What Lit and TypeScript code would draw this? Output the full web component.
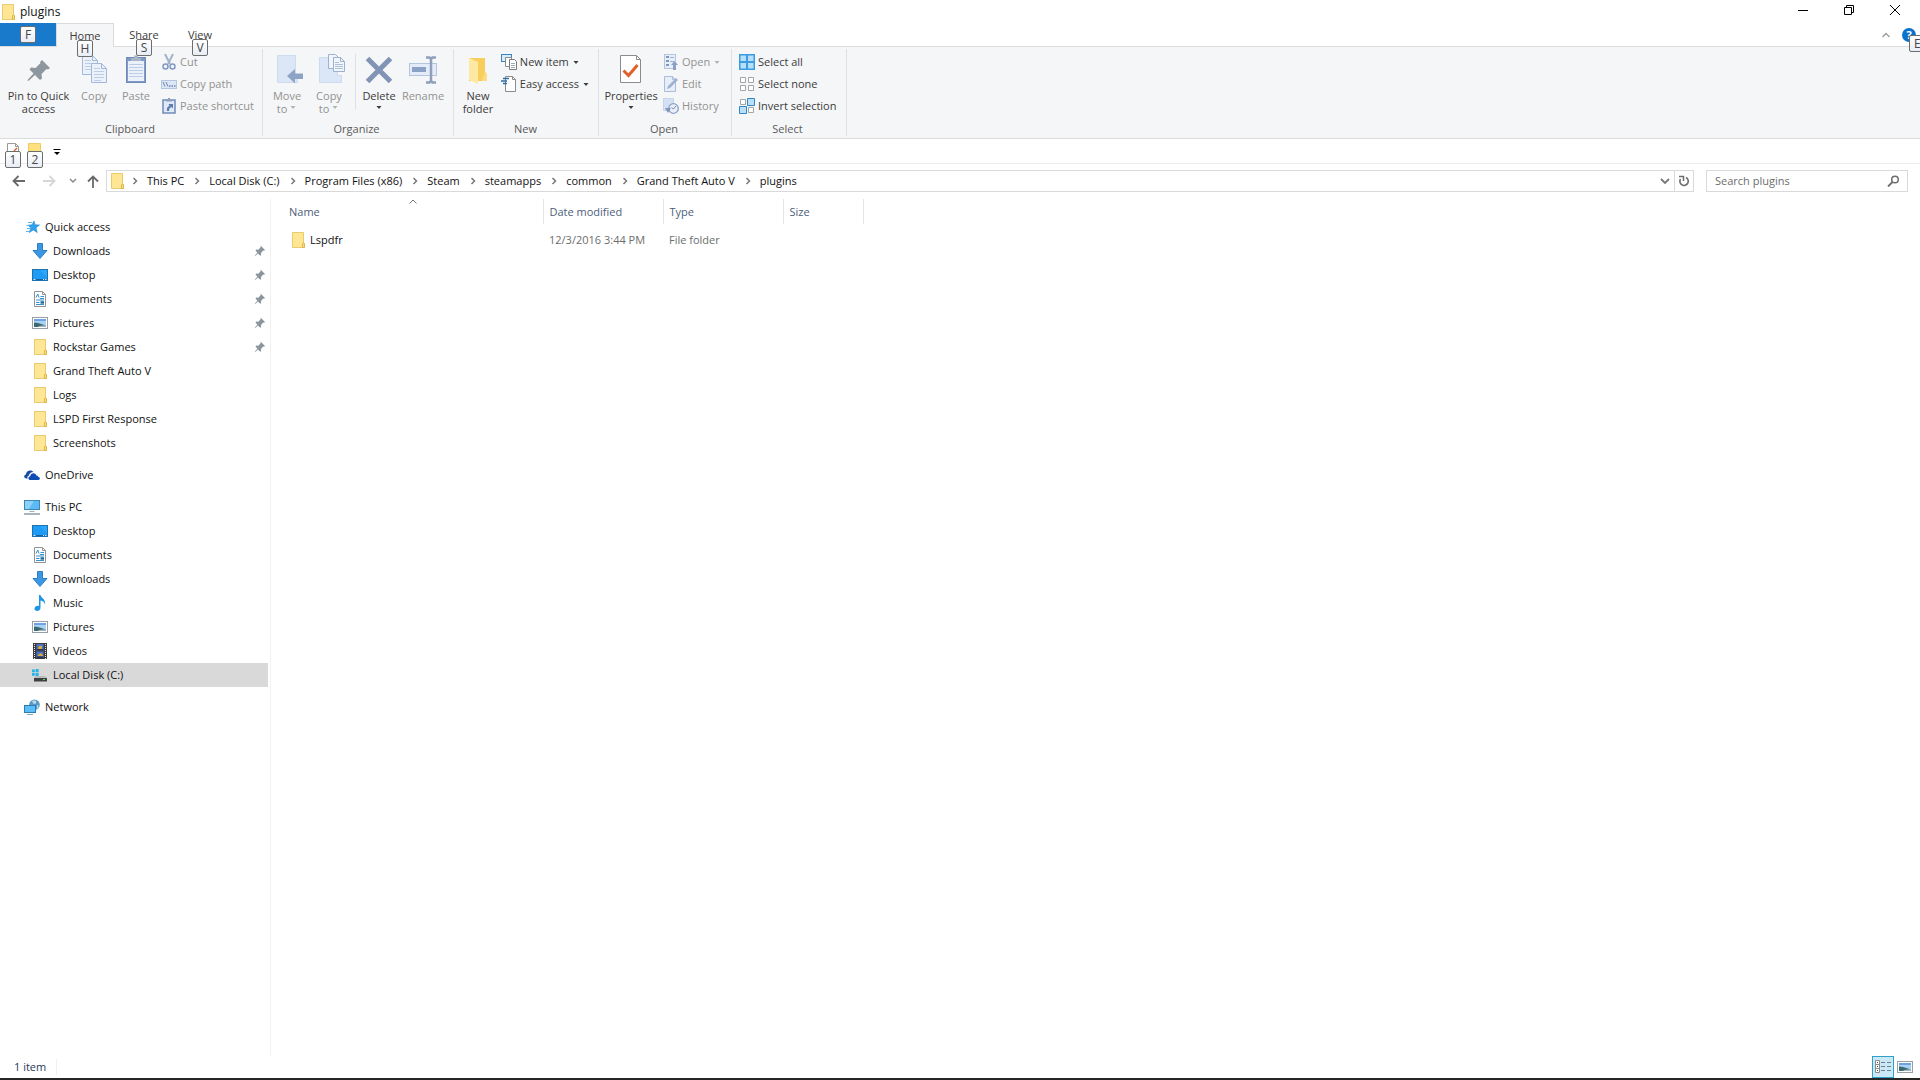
import { LitElement, html, css, nothing, TemplateResult } from "lit";
import { customElement } from "lit/decorators.js";
import { classMap } from "lit/directives/class-map.js";

/* ---------- icons ---------- */

const folder = () => html`<svg width="16" height="16" viewBox="0 0 16 16" aria-hidden="true">
  <path d="M2.500.5h11v10l1 1v4h-12z" fill="#ffe694" stroke="#e9cb6c" />
  <path d="M12.500 15.500v-3.500l1-1.500 1 1.500v3.500z" fill="#fbdc7c" stroke="#dcb84f" />
</svg>`;

const folderLarge = () => html`<svg width="32" height="32" viewBox="0 0 32 32" aria-hidden="true">
  <path d="M7 4h16v14l2 2v7H7z" fill="#f8cf5c" />
  <path d="M23 18l2 2v7h-5z" fill="#fbdc85" />
  <path d="M7 4l9 4v22l-9-4z" fill="#ffe9a2" />
</svg>`;

const pinLarge = () => html`<svg width="32" height="32" viewBox="0 0 32 32" aria-hidden="true">
  <path d="M19 6l8 8-2 1.500-1.500-.5-5 5 .5 4.500-2 1.500-5-5-6 5.500-1.500.5.500-1.500 5.500-6-4-4 1.500-2 4.500.5 5-5L17 8z" fill="#8f979e" />
</svg>`;

const pinSmall = () => html`<svg width="12" height="12" viewBox="0 0 12 12" aria-hidden="true">
  <path d="M7 1l4 4-1 .8-.8-.2L7 8l.2 2-1 .8L4 8.500 1.300 10.900l-.4-.4L3.400 7.800 1.500 5.500l.8-.9 2 .1L6.500 2.600l-.2-.8z" fill="#8c949b" />
</svg>`;

const copyLarge = () => html`<svg width="32" height="32" viewBox="0 0 32 32" aria-hidden="true">
  <g fill="#eaf1fb" stroke="#a3b8d8">
    <path d="M4.500 1.500h10l5 5v14h-15z" /><path d="M14.500 1.500v5h5" fill="none" />
    <path d="M7 6.500h6M7 9.500h9M7 12.500h9M7 15.500h9" stroke="#bccde6" />
    <path d="M13.500 9.500h10l5 5v14h-15z" /><path d="M23.500 9.500v5h5" fill="none" />
    <path d="M16 14.500h6M16 17.500h10M16 20.500h10M16 23.500h10M16 26.500h7" stroke="#bccde6" />
  </g>
</svg>`;

const pasteLarge = () => html`<svg width="32" height="32" viewBox="0 0 32 32" aria-hidden="true">
  <rect x="6.500" y="3.500" width="19" height="25" fill="#7f9bc6" stroke="#6f8bb8" />
  <rect x="8" y="7" width="16" height="20" fill="#eaf1fb" />
  <path d="M9 10.500h14M9 13.500h14M9 16.500h14M9 19.500h14M9 22.500h14" stroke="#bccde6" />
  <path d="M11 7V4h3V1.500h4V4h3v3z" fill="#a9b5c6" />
</svg>`;

const cut = () => html`<svg width="16" height="16" viewBox="0 0 16 16" aria-hidden="true">
  <path d="M4 0l5 10M12 0L7 10" stroke="#a3b2c9" stroke-width="2" />
  <circle cx="4.500" cy="12.500" r="2.500" fill="none" stroke="#8199c2" stroke-width="1.500" />
  <circle cx="11.500" cy="12.500" r="2.500" fill="none" stroke="#8199c2" stroke-width="1.500" />
</svg>`;

const copyPath = () => html`<svg width="16" height="16" viewBox="0 0 16 16" aria-hidden="true">
  <rect x=".5" y="4.500" width="15" height="8" fill="#dbe6f6" stroke="#b4c5df" />
  <path d="M2 6l2 4.500M5 6l2 4.500" stroke="#6f87b0" />
  <path d="M8 10h1.500M10.500 10H12M13 10h1.500" stroke="#6f87b0" stroke-width="1.500" />
</svg>`;

const pasteShortcut = () => html`<svg width="16" height="16" viewBox="0 0 16 16" aria-hidden="true">
  <rect x="2" y="2" width="12" height="13" fill="#dfe9f7" stroke="#6f8bb8" stroke-width="1.500" />
  <path d="M5 3.500V1.500h2V0h2v1.500h2v2z" fill="#8f9fb8" />
  <path d="M6 13c-.5-3 .5-4.500 2.500-5L7.500 6H12v4.500l-1.500-1.500C9 9.500 8 10.500 8 13z" fill="#5f7cab" />
</svg>`;

const moveTo = () => html`<svg width="32" height="32" viewBox="0 0 32 32" aria-hidden="true">
  <path d="M6.500 1.500h18v20h2v7h-20z" fill="#dbe7f6" stroke="#cddbee" />
  <path d="M16 22l8-7v4.500h8v5.500h-8v4.500z" fill="#8fa3c4" />
</svg>`;

const copyTo = () => html`<svg width="32" height="32" viewBox="0 0 32 32" aria-hidden="true">
  <path d="M6.500 3.500h18v18h4v7h-22z" fill="#dbe7f6" stroke="#cddbee" />
  <g fill="#f2f6fc" stroke="#9db1d1">
    <path d="M15.500.5h7l3 3v11h-10z" />
    <path d="M20.500 3.500h7l4 4v10h-11z" /><path d="M27.500 3.500v4h4" fill="none" />
    <path d="M22 8.500h4M22 10.500h8M22 12.500h8M22 14.500h8" stroke="#aebfda" />
  </g>
</svg>`;

const deleteIcon = () => html`<svg width="32" height="32" viewBox="0 0 32 32" aria-hidden="true">
  <path d="M4.500 4.500l23 23M27.500 4.500l-23 23" stroke="#8194b5" stroke-width="5" />
</svg>`;

const renameIcon = () => html`<svg width="32" height="32" viewBox="0 0 32 32" aria-hidden="true">
  <rect x="2.500" y="9.500" width="27" height="12" fill="#e3ecf8" stroke="#b4c5df" />
  <rect x="5" y="13" width="14" height="5" fill="#8ba1c6" />
  <path d="M19 3.500h3.500L24 5l1.500-1.500H29M24 4v23M19 28.500h3.500L24 27l1.500 1.500H29" stroke="#8f9fba" stroke-width="2.500" fill="none" />
</svg>`;

const newItem = () => html`<svg width="16" height="16" viewBox="0 0 16 16" aria-hidden="true">
  <rect x=".5" y=".5" width="10" height="7" fill="#d9ecfa" stroke="#3c84bd" />
  <path d="M4.500 3.500h6v9h-6z" fill="#fff" stroke="#8b8b8b" />
  <path d="M8.500 5.500h5l2 2v8h-7z" fill="#fff" stroke="#7b7b7b" />
  <path d="M10 9.500h4M10 11.500h4M10 13.500h4" stroke="#9aabb9" />
</svg>`;

const easyAccess = () => html`<svg width="16" height="16" viewBox="0 0 16 16" aria-hidden="true">
  <path d="M4.500.5h7l3 3v12h-10z" fill="#fff" stroke="#8b8b8b" /><path d="M11.500.5v3h3" fill="none" stroke="#8b8b8b" />
  <path d="M2 2.500h6M0 5h6M2 7.500h4" stroke="#2b6fa5" stroke-width="1.500" />
</svg>`;

const propertiesIcon = () => html`<svg width="32" height="32" viewBox="0 0 32 32" aria-hidden="true">
  <path d="M5.500 1.500h16l4 4v23h-20z" fill="#fff" stroke="#8b8b8b" /><path d="M21.500 1.500v4h4" fill="none" stroke="#8b8b8b" />
  <path d="M8.500 16.500l5 5L22.500 11" fill="none" stroke="#e0602a" stroke-width="3" />
</svg>`;

const openIcon = () => html`<svg width="16" height="16" viewBox="0 0 16 16" aria-hidden="true">
  <rect x="1.500" y=".5" width="11" height="14" fill="#e6eefa" stroke="#b4c5df" />
  <path d="M3 3h3M3 7h3M3 11h3" stroke="#7f96bd" stroke-width="2" />
  <path d="M7 3.500h4M7 7.500h4" stroke="#9fb2d1" />
  <path d="M8 11l3.500-4L15 11h-2v5h-3v-5z" fill="#8ba0c4" />
</svg>`;

const editIcon = () => html`<svg width="16" height="16" viewBox="0 0 16 16" aria-hidden="true">
  <path d="M1.500.5h8l3 3v12h-11z" fill="#e6eefa" stroke="#a9bddb" /><path d="M9.500.5v3h3" fill="none" stroke="#a9bddb" />
  <path d="M4 13l1-3 8-8 2 2-8 8z" fill="#9fb2d1" />
</svg>`;

const historyIcon = () => html`<svg width="16" height="16" viewBox="0 0 16 16" aria-hidden="true">
  <path d="M.5.5h10v12H.5z" fill="#d5e1f3" stroke="#c5d4ea" />
  <circle cx="10.500" cy="10.500" r="4.800" fill="#e9f0fa" stroke="#8ba0c4" stroke-width="1.300" />
  <path d="M13 8l-2.500 3-2-1.500" fill="none" stroke="#7188b0" />
  <path d="M2 10h6l-3 5z" fill="#7f96bd" />
</svg>`;

const selectAll = () => html`<svg width="16" height="16" viewBox="0 0 16 16" aria-hidden="true">
  <rect width="16" height="16" fill="#3d9be0" />
  <path d="M1.500 1.500h5.500v5.500H1.500zM9 1.500h5.500v5.500H9zM1.500 9h5.500v5.500H1.500zM9 9h5.500v5.500H9z" fill="#b5dffb" />
</svg>`;

const selectNone = () => html`<svg width="16" height="16" viewBox="0 0 16 16" aria-hidden="true">
  <path d="M1.500 1.500h5v5h-5zM9.500 1.500h5v5h-5zM1.500 9.500h5v5h-5zM9.500 9.500h5v5h-5z" fill="#fff" stroke="#a5a5a5" />
</svg>`;

const invertSelection = () => html`<svg width="16" height="16" viewBox="0 0 16 16" aria-hidden="true">
  <path d="M1.500 1.500h5v5h-5zM9.500 9.500h5v5h-5z" fill="#fff" stroke="#a5a5a5" />
  <path d="M8.500.5h7v7h-7zM.5 8.500h7v7h-7z" fill="#b9dffa" stroke="#3186c8" />
</svg>`;

const star = () => html`<svg width="16" height="16" viewBox="0 0 16 16" aria-hidden="true">
  <path d="M10 2l1 3.800 4.500.2-3.500 2.800 1.200 4.700-3.800-2.500-4.200 2.500 1.700-4.500L4 6.200l4-.4z" fill="#2fa2ec" stroke="#1f86cf" stroke-width=".6" />
  <path d="M4 3.500h4M2.500 6.500h3M3 9.500h3M2 12.500h3" stroke="#5bb6ee" />
</svg>`;

const downloads = () => html`<svg width="16" height="16" viewBox="0 0 16 16" aria-hidden="true">
  <path d="M5.500.5h5v7h4.500L8 15.500 1 7.500h4.500z" fill="#3b97e3" stroke="#2f7fc6" />
</svg>`;

const desktop = () => html`<svg width="16" height="16" viewBox="0 0 16 16" aria-hidden="true">
  <rect x=".5" y="2.500" width="15" height="11" fill="#1e9cf5" stroke="#1b72b3" />
  <path d="M15 3v8L8 3z" fill="#2ca6f9" />
  <path d="M1 12.500h14" stroke="#1464a0" />
  <path d="M1.500 12.500h2M11 12.500h1M13 12.500h1.500" stroke="#d4ebfb" />
</svg>`;

const documents = () => html`<svg width="16" height="16" viewBox="0 0 16 16" aria-hidden="true">
  <path d="M2.500.5h8l3 3v12h-11z" fill="#fff" stroke="#8e9499" /><path d="M10.500.5v3h3" fill="none" stroke="#8e9499" />
  <path d="M4 6.500l1.800-3.500 1.200 3.500M4 9h8M4 13.500h8M4 11.500h3.500" fill="none" stroke="#3a8ecb" />
  <path d="M8.500 5.500h3.500M8 7.500h4" stroke="#3a8ecb" /><path d="M8.500 10.200h3.500v2.500H8.500z" fill="#246ba3" />
</svg>`;

const pictures = () => html`<svg width="16" height="16" viewBox="0 0 16 16" aria-hidden="true">
  <rect x=".5" y="2.500" width="15" height="11" fill="#fff" stroke="#97a0a6" />
  <path d="M2 4h12v8H2z" fill="#a9d3f5" />
  <path d="M2 4h12v2H2z" fill="#6fa3e0" />
  <path d="M2 7.500l4 .5 8 2.500V12H2z" fill="#3d6a72" /><path d="M7 11l7-1v2H6z" fill="#a0b4c2" />
</svg>`;

const cloud = () => html`<svg width="16" height="16" viewBox="0 0 16 16" aria-hidden="true">
  <path d="M2.500 11.500C-.5 11.500-.5 8 2 7.500 2 3.500 7.500 2 9.500 5 6.500 5 5 7 5 8.500 3.500 9 3 10.500 3.800 11.500z" fill="#1a4ba0" />
  <path d="M6.500 13c-2.700 0-2.700-3.300-.3-3.700C6.500 5.500 11.500 5 12.300 8.500 13.500 8.300 14 9 14 9.700c2.500.2 2.500 3.300.3 3.300z" fill="#0f4db3" />
</svg>`;

const thisPc = () => html`<svg width="16" height="16" viewBox="0 0 16 16" aria-hidden="true">
  <rect x=".5" y="1.500" width="15" height="9" fill="#5bb9f5" stroke="#3d86b8" />
  <path d="M1 2h9L5 10H1z" fill="#8dd0fa" />
  <path d="M5.500 12.500h5" stroke="#9db4c2" /><path d="M0 15h16" stroke="#8f9ba3" stroke-width="1.500" />
</svg>`;

const music = () => html`<svg width="16" height="16" viewBox="0 0 16 16" aria-hidden="true">
  <path d="M7 0h1.500c.5 3 5.500 4 4.500 9.500-.5-2.500-2-3.500-4.500-4v7.500c0 3.500-6 4-6 .8C2.500 11.500 5 10.500 7 11z" fill="#1e95e6" />
</svg>`;

const videos = () => html`<svg width="16" height="16" viewBox="0 0 16 16" aria-hidden="true">
  <rect x="1" y="0" width="14" height="16" fill="#3b3b3b" />
  <path d="M2.500 1v15M13.500 1v15" stroke="#e6e6e6" stroke-dasharray="1 1" />
  <path d="M4.500 1h7v6.500h-7zM4.500 8.500h7V15h-7z" fill="#4b74c9" />
  <path d="M7 3h3v3H6zM6 12l3-2 2.500 3H6z" fill="#d9ab38" /><path d="M5 6h6v1.500H5zM5 13.500h6V15H5z" fill="#28304a" />
</svg>`;

const disk = () => html`<svg width="16" height="16" viewBox="0 0 16 16" aria-hidden="true">
  <path d="M0 2.500h2.800v2.800H0zM3.600 2h3v3.300h-3zM0 6h2.800v2.800H0zM3.600 6h3v3.200h-3z" fill="#25b3e8" />
  <path d="M3.500 9h9.500l2 2H2z" fill="#b9bdc0" /><path d="M2 11h13v3.500H2z" fill="#3d4143" />
  <path d="M11 12.500h2" stroke="#4fe05c" stroke-width="1.200" />
</svg>`;

const network = () => html`<svg width="16" height="16" viewBox="0 0 16 16" aria-hidden="true">
  <circle cx="10.500" cy="5.800" r="5.300" fill="#5a9ac2" /><path d="M8 2c3-2 5 0 4 2s-3 1-4-2zM13 6c2 0 2 3 0 4z" fill="#b7d9ec" />
  <rect x=".5" y="6.500" width="11" height="7" fill="#5bbdf8" stroke="#2b7cb5" />
  <path d="M3 15.500h6" stroke="#7fa8c2" />
</svg>`;

const caret = () => html`<svg class="caret" width="8" height="5" viewBox="0 0 8 5" aria-hidden="true">
  <path d="M1.500 1h5L4 4z" fill="currentColor" />
</svg>`;

const chevron = () => html`<svg width="8" height="8" viewBox="0 0 8 8" aria-hidden="true">
  <path d="M2.500 1l3 3-3 3" fill="none" stroke="#777" stroke-width="1.500" />
</svg>`;

/* ---------- data ---------- */

interface Command {
  label: string;
  icon: () => TemplateResult;
  disabled?: boolean;
  menu?: boolean;
}

interface Place {
  label: string;
  icon: () => TemplateResult;
  pinned?: boolean;
  selected?: boolean;
}

interface PlaceGroup extends Place {
  children: Place[];
}

const places: PlaceGroup[] = [
  {
    label: "Quick access",
    icon: star,
    children: [
      { label: "Downloads", icon: downloads, pinned: true },
      { label: "Desktop", icon: desktop, pinned: true },
      { label: "Documents", icon: documents, pinned: true },
      { label: "Pictures", icon: pictures, pinned: true },
      { label: "Rockstar Games", icon: folder, pinned: true },
      { label: "Grand Theft Auto V", icon: folder },
      { label: "Logs", icon: folder },
      { label: "LSPD First Response", icon: folder },
      { label: "Screenshots", icon: folder },
    ],
  },
  { label: "OneDrive", icon: cloud, children: [] },
  {
    label: "This PC",
    icon: thisPc,
    children: [
      { label: "Desktop", icon: desktop },
      { label: "Documents", icon: documents },
      { label: "Downloads", icon: downloads },
      { label: "Music", icon: music },
      { label: "Pictures", icon: pictures },
      { label: "Videos", icon: videos },
      { label: "Local Disk (C:)", icon: disk, selected: true },
    ],
  },
  { label: "Network", icon: network, children: [] },
];

const crumbs = [
  "This PC",
  "Local Disk (C:)",
  "Program Files (x86)",
  "Steam",
  "steamapps",
  "common",
  "Grand Theft Auto V",
  "plugins",
];

const resets = css`
  button,
  input {
    font: inherit;
    color: inherit;
    border: 0;
    padding: 0;
    margin: 0;
    background: none;
  }
  a {
    color: inherit;
    text-decoration: none;
  }
  svg {
    display: block;
    flex: none;
  }
  .keytip {
    position: absolute;
    z-index: 1;
    box-sizing: border-box;
    width: 16px;
    height: 17px;
    border: 1px solid #6d6d6d;
    border-radius: 2px;
    background: linear-gradient(#fff, #e8edf6);
    color: #454545;
    font-size: 12px;
    line-height: 15px;
    text-align: center;
  }
`;

/* ---------- ribbon ---------- */

@customElement("explorer-ribbon")
export class ExplorerRibbon extends LitElement {
  static styles = [
    resets,
    css`
      :host {
        display: flex;
        height: 91px;
        background: #f5f6f7;
        border-bottom: 1px solid #dadbdc;
        color: #3b3b3b;
      }
      .group {
        display: flex;
        flex-direction: column;
        box-sizing: border-box;
        margin: 2px 0;
        padding: 2px 4px 0;
        border-right: 1px solid #dfe0e1;
      }
      .commands {
        display: flex;
        flex: 1;
      }
      .title {
        padding-right: 2px;
        color: #5a5a5a;
        text-align: center;
        line-height: 14px;
      }
      .large {
        display: flex;
        flex-direction: column;
        align-items: center;
        width: 42px;
        padding-top: 3px;
        line-height: 13px;
        white-space: nowrap;
      }
      .large svg:first-child {
        margin-bottom: 3px;
      }
      .wide {
        width: 56px;
      }
      .widest {
        width: 69px;
      }
      .line {
        display: flex;
        align-items: center;
        gap: 2px;
        height: 13px;
      }
      .stack {
        display: flex;
        flex-direction: column;
        padding: 0 4px;
      }
      .small {
        display: flex;
        align-items: center;
        gap: 3px;
        height: 22px;
        white-space: nowrap;
      }
      .large:disabled,
      .small:disabled {
        color: #929292;
      }
      .large:disabled .caret,
      .small:disabled .caret {
        color: #b4b4b4;
      }
      .divider {
        width: 1px;
        height: 56px;
        margin: 3px 2px 0 5px;
        background: #dfe0e1;
      }
      .clipboard {
        width: 263px;
      }
      .organize {
        width: 191px;
        padding-left: 3px;
      }
      .organize .large:last-child {
        width: 46px;
      }
      .new {
        width: 145px;
        padding-left: 5px;
      }
      .open {
        width: 133px;
      }
      .select {
        width: 115px;
        padding-left: 3px;
      }
    `,
  ];

  private large(icon: () => TemplateResult, lines: string[], opts: { disabled?: boolean; menu?: boolean; size?: string } = {}) {
    const inlineMenu = opts.menu && lines.length > 1;
    return html`<button class="large ${opts.size ?? ""}" ?disabled=${opts.disabled}>
      ${icon()}
      ${lines.map(
        (text, i) =>
          html`<span class="line">${text}${inlineMenu && i === lines.length - 1 ? caret() : nothing}</span>`
      )}
      ${opts.menu && !inlineMenu ? html`<span class="line">${caret()}</span>` : nothing}
    </button>`;
  }

  private stack(items: Command[]) {
    return html`<div class="stack">
      ${items.map(
        (c) => html`<button class="small" ?disabled=${c.disabled}>
          ${c.icon()}<span>${c.label}</span>${c.menu ? caret() : nothing}
        </button>`
      )}
    </div>`;
  }

  private group(name: string, content: TemplateResult) {
    return html`<section class="group ${name.toLowerCase()}" aria-label=${name}>
      <div class="commands">${content}</div>
      <div class="title">${name}</div>
    </section>`;
  }

  render() {
    const off = { disabled: true };
    return html`
      ${this.group(
        "Clipboard",
        html`${this.large(pinLarge, ["Pin to Quick", "access"], { size: "widest" })}
        ${this.large(copyLarge, ["Copy"], off)} ${this.large(pasteLarge, ["Paste"], off)}
        ${this.stack([
          { label: "Cut", icon: cut, disabled: true },
          { label: "Copy path", icon: copyPath, disabled: true },
          { label: "Paste shortcut", icon: pasteShortcut, disabled: true },
        ])}`
      )}
      ${this.group(
        "Organize",
        html`${this.large(moveTo, ["Move", "to"], { disabled: true, menu: true })}
          ${this.large(copyTo, ["Copy", "to"], { disabled: true, menu: true })}
          <div class="divider"></div>
          ${this.large(deleteIcon, ["Delete"], { menu: true })} ${this.large(renameIcon, ["Rename"], { disabled: true })}`
      )}
      ${this.group(
        "New",
        html`${this.large(folderLarge, ["New", "folder"])}
        ${this.stack([
          { label: "New item", icon: newItem, menu: true },
          { label: "Easy access", icon: easyAccess, menu: true },
        ])}`
      )}
      ${this.group(
        "Open",
        html`${this.large(propertiesIcon, ["Properties"], { menu: true, size: "wide" })}
        ${this.stack([
          { label: "Open", icon: openIcon, menu: true, disabled: true },
          { label: "Edit", icon: editIcon, disabled: true },
          { label: "History", icon: historyIcon, disabled: true },
        ])}`
      )}
      ${this.group(
        "Select",
        this.stack([
          { label: "Select all", icon: selectAll },
          { label: "Select none", icon: selectNone },
          { label: "Invert selection", icon: invertSelection },
        ])
      )}
    `;
  }
}

/* ---------- navigation pane ---------- */

@customElement("explorer-places")
export class ExplorerPlaces extends LitElement {
  static styles = [
    resets,
    css`
      :host {
        display: block;
        box-sizing: border-box;
        width: 271px;
        padding: 16px 2px 0 0;
        border-right: 1px solid #f1f1f1;
      }
      ul {
        list-style: none;
        margin: 0;
        padding: 0;
      }
      .group {
        margin-bottom: 8px;
      }
      .place {
        display: flex;
        align-items: center;
        gap: 5px;
        height: 24px;
        padding: 0 2px 0 24px;
      }
      .child {
        padding-left: 32px;
      }
      .selected {
        background: #d9d9d9;
      }
      .pin {
        margin-left: auto;
      }
    `,
  ];

  private place(p: Place, child: boolean) {
    return html`<a class=${classMap({ place: true, child, selected: !!p.selected })} href="#">
      ${p.icon()}<span>${p.label}</span>${p.pinned ? html`<span class="pin">${pinSmall()}</span>` : nothing}
    </a>`;
  }

  render() {
    return html`<nav aria-label="Places">
      <ul>
        ${places.map(
          (g) => html`<li class="group">
            ${this.place(g, false)}
            ${g.children.length
              ? html`<ul>
                  ${g.children.map((c) => html`<li>${this.place(c, true)}</li>`)}
                </ul>`
              : nothing}
          </li>`
        )}
      </ul>
    </nav>`;
  }
}

/* ---------- window ---------- */

@customElement("app-root")
export class AppRoot extends LitElement {
  static styles = [
    resets,
    css`
      :host {
        display: flex;
        flex-direction: column;
        min-height: 100vh;
        overflow: hidden;
        background: #fff;
        color: #111;
        font-family: "Open Sans", "Noto Sans", sans-serif;
        font-size: 11px;
        line-height: 16px;
      }
      .titlebar {
        display: flex;
        height: 23px;
        padding-right: 2px;
      }
      .caption {
        display: flex;
        align-items: center;
        gap: 4px;
        flex: 1;
        margin: 0;
        font-size: 12px;
        font-weight: 400;
      }
      .window-button {
        display: grid;
        place-items: center;
        width: 46px;
        height: 20px;
      }
      .tabs {
        display: flex;
        height: 23px;
        border-bottom: 1px solid #dadbdc;
        color: #3b3b3b;
      }
      .tab {
        position: relative;
        box-sizing: border-box;
        height: 23px;
        width: 58px;
      }
      .tab .keytip {
        left: 50%;
        bottom: -10px;
        margin-left: -8px;
      }
      .file {
        width: 56px;
        background: #1979ca;
      }
      .file .keytip {
        bottom: 3px;
      }
      .active {
        height: 24px;
        background: #f5f6f7;
        border: 1px solid #dadbdc;
        border-width: 1px 1px 0;
      }
      .share {
        width: 60px;
      }
      .view {
        width: 52px;
      }
      .ribbon-tools {
        display: flex;
        align-items: center;
        gap: 12px;
        margin-left: auto;
        padding-right: 4px;
      }
      .help {
        position: relative;
        width: 14px;
        height: 14px;
        border-radius: 50%;
        background: #0a74cc;
        color: #fff;
        font-weight: 700;
        line-height: 14px;
      }
      .help .keytip {
        left: 7px;
        top: 7px;
        width: 20px;
        padding-left: 4px;
        font-weight: 400;
        text-align: left;
      }
      .quick {
        display: flex;
        height: 24px;
        padding-left: 2px;
        border-bottom: 1px solid #ebebeb;
      }
      .quick-button {
        position: relative;
        display: grid;
        place-items: start center;
        width: 22px;
        height: 24px;
        padding-top: 4px;
      }
      .quick-button .keytip {
        left: 3px;
        top: 12px;
      }
      .address-row {
        display: flex;
        padding: 6px 12px 7px 4px;
      }
      .nav-button {
        display: grid;
        place-items: center;
        width: 30px;
        height: 22px;
      }
      .narrow {
        width: 18px;
      }
      .up {
        width: 22px;
        margin-right: 2px;
      }
      .address {
        display: flex;
        flex: 1;
        box-sizing: border-box;
        height: 22px;
        border: 1px solid #d9d9d9;
      }
      .crumbs {
        display: flex;
        align-items: center;
        flex: 1;
        list-style: none;
        margin: 0;
        padding: 0 0 1px 2px;
        white-space: nowrap;
      }
      .crumb {
        display: flex;
        align-items: center;
      }
      .crumb svg {
        margin: 0 8px 0 6px;
      }
      .crumb a {
        margin-right: 3px;
      }
      .address-button {
        display: grid;
        place-items: center;
        width: 19px;
      }
      .refresh {
        border-left: 1px solid #d9d9d9;
      }
      .search {
        display: flex;
        align-items: center;
        box-sizing: border-box;
        width: 202px;
        height: 22px;
        margin-left: 12px;
        padding: 0 7px 0 8px;
        border: 1px solid #d9d9d9;
      }
      .search input {
        flex: 1;
        min-width: 0;
        outline: 0;
      }
      .search input::placeholder {
        color: #6d6d6d;
        opacity: 1;
      }
      .body {
        display: flex;
        flex: 1;
      }
      .files {
        flex: 1;
        padding-left: 12px;
      }
      table {
        table-layout: fixed;
        width: 580px;
        border-collapse: collapse;
      }
      th,
      td {
        box-sizing: border-box;
        padding: 0 6px;
        text-align: left;
        font-weight: 400;
      }
      th {
        position: relative;
        height: 25px;
        border-right: 1px solid #e5e5e5;
        color: #4c607a;
      }
      td {
        height: 26px;
        padding-top: 6px;
        color: #6d6d6d;
      }
      .name {
        width: 260px;
      }
      .medium {
        width: 120px;
      }
      .size {
        width: 80px;
      }
      .sort {
        position: absolute;
        top: 0;
        left: 50%;
        margin-left: -4px;
      }
      .file-name {
        display: flex;
        align-items: center;
        gap: 4px;
        padding-left: 1px;
        color: #111;
      }
      .status {
        display: flex;
        align-items: center;
        height: 22px;
        padding: 0 4px 0 14px;
        color: #1e395b;
      }
      .count {
        padding-right: 10px;
        border-right: 1px solid #f0f0f0;
      }
      .views {
        display: flex;
        margin-left: auto;
      }
      .view-mode {
        display: grid;
        place-items: center;
        box-sizing: border-box;
        width: 22px;
        height: 22px;
      }
      .pressed {
        border: 1px solid #2f9fc9;
        background: #cbe8f6;
      }
      .edge {
        height: 2px;
        background: #262626;
      }
    `,
  ];

  private tab(label: string, key: string, extra = "") {
    return html`<button class="tab ${extra}">${label}<span class="keytip">${key}</span></button>`;
  }

  render() {
    return html`
      <header class="titlebar">
        <h1 class="caption">${folder()}plugins</h1>
        <button class="window-button" aria-label="Minimize">
          <svg width="10" height="10"><path d="M0 5.500h10" stroke="#000" /></svg>
        </button>
        <button class="window-button" aria-label="Restore">
          <svg width="10" height="10"><path d="M.5 2.500h7v7h-7zM2.500 2.500v-2h7v7h-2" fill="none" stroke="#000" /></svg>
        </button>
        <button class="window-button" aria-label="Close">
          <svg width="10" height="10"><path d="M0 0l10 10M10 0L0 10" stroke="#000" /></svg>
        </button>
      </header>

      <div class="tabs">
        <button class="tab file" aria-label="File"><span class="keytip">F</span></button>
        ${this.tab("Home", "H", "active")} ${this.tab("Share", "S", "share")} ${this.tab("View", "V", "view")}
        <div class="ribbon-tools">
          <button aria-label="Collapse ribbon">
            <svg width="8" height="6"><path d="M.5 5L4 1.500 7.500 5" fill="none" stroke="#9a9a9a" stroke-width="1.300" /></svg>
          </button>
          <button class="help" aria-label="Help">?<span class="keytip">E</span></button>
        </div>
      </div>

      <explorer-ribbon></explorer-ribbon>

      <div class="quick">
        <button class="quick-button" aria-label="Properties">
          <svg width="12" height="14"><path d="M.5.5h8l3 3v10H.5z" fill="#fff" stroke="#9a9a9a" /><path d="M8.500.5v3h3" fill="none" stroke="#9a9a9a" /><path d="M7 8l3-3" stroke="#e0602a" stroke-width="1.500" /></svg>
          <span class="keytip">1</span>
        </button>
        <button class="quick-button" aria-label="New folder">
          <svg width="14" height="14"><path d="M.5.5h12v13H.5z" fill="#ffe07e" stroke="#edcb68" /></svg>
          <span class="keytip">2</span>
        </button>
        <button class="quick-button" aria-label="Customize toolbar">
          <svg width="8" height="13"><path d="M.5 6.500h7" stroke="#000" /><path d="M1 9h6L4 12z" /></svg>
        </button>
      </div>

      <div class="address-row">
        <button class="nav-button" aria-label="Back">
          <svg width="14" height="12"><path d="M6.500 1l-5 5 5 5M1.500 6H13" fill="none" stroke="#6a6a6a" stroke-width="1.800" /></svg>
        </button>
        <button class="nav-button" aria-label="Forward" disabled>
          <svg width="14" height="12"><path d="M7.500 1l5 5-5 5M12.500 6H1" fill="none" stroke="#d6d6d6" stroke-width="1.800" /></svg>
        </button>
        <button class="nav-button narrow" aria-label="Recent locations">
          <svg width="8" height="6"><path d="M1 1l3 3 3-3" fill="none" stroke="#8a8a8a" stroke-width="1.500" /></svg>
        </button>
        <button class="nav-button up" aria-label="Up">
          <svg width="12" height="13"><path d="M1 6.500l5-5 5 5M6 1.500V13" fill="none" stroke="#6a6a6a" stroke-width="1.800" /></svg>
        </button>
        <div class="address">
          <ol class="crumbs">
            <li>${folder()}</li>
            ${crumbs.map((c) => html`<li class="crumb">${chevron()}<a href="#">${c}</a></li>`)}
          </ol>
          <button class="address-button" aria-label="Previous locations">
            <svg width="10" height="7"><path d="M1 1l4 4 4-4" fill="none" stroke="#777" stroke-width="1.800" /></svg>
          </button>
          <button class="address-button refresh" aria-label="Refresh">
            <svg width="12" height="12"><path d="M8 2.500a4.200 4.200 0 1 1-5.500 1.500" fill="none" stroke="#6d6d6d" stroke-width="1.600" /><path d="M1 1.500h4.500V6" fill="none" stroke="#6d6d6d" stroke-width="1.500" /></svg>
          </button>
        </div>
        <label class="search">
          <input type="text" placeholder="Search plugins" aria-label="Search plugins" />
          <svg width="13" height="12"><circle cx="8" cy="4.500" r="3.300" fill="none" stroke="#6d6d6d" stroke-width="1.500" /><path d="M5.500 7L1 11.500" stroke="#6d6d6d" stroke-width="1.800" /></svg>
        </label>
      </div>

      <div class="body">
        <explorer-places></explorer-places>
        <main class="files">
          <table>
            <thead>
              <tr>
                <th class="name">
                  Name
                  <svg class="sort" width="8" height="5"><path d="M.5 4.500L4 1l3.500 3.500" fill="none" stroke="#777" /></svg>
                </th>
                <th class="medium">Date modified</th>
                <th class="medium">Type</th>
                <th class="size">Size</th>
              </tr>
            </thead>
            <tbody>
              <tr>
                <td><a class="file-name" href="#">${folder()}Lspdfr</a></td>
                <td>12/3/2016 3:44 PM</td>
                <td>File folder</td>
                <td></td>
              </tr>
            </tbody>
          </table>
        </main>
      </div>

      <footer class="status">
        <span class="count">1 item</span>
        <div class="views">
          <button class="view-mode pressed" aria-label="Details view">
            <svg width="16" height="14"><path d="M.5.5h4v4h-4zM.5 4.500h4v4h-4zM.5 8.500h4v4h-4z" fill="#fff" stroke="#8b8b8b" /><path d="M2 2.500h1M2 6.500h1M2 10.500h1" stroke="#444" /><path d="M6 2.500h4M12 2.500h4M6 6.500h4M12 6.500h4M6 10.500h4M12 10.500h4" stroke="#6d7f8b" /></svg>
          </button>
          <button class="view-mode" aria-label="Large icons view">${pictures()}</button>
        </div>
      </footer>
      <div class="edge"></div>
    `;
  }
}
